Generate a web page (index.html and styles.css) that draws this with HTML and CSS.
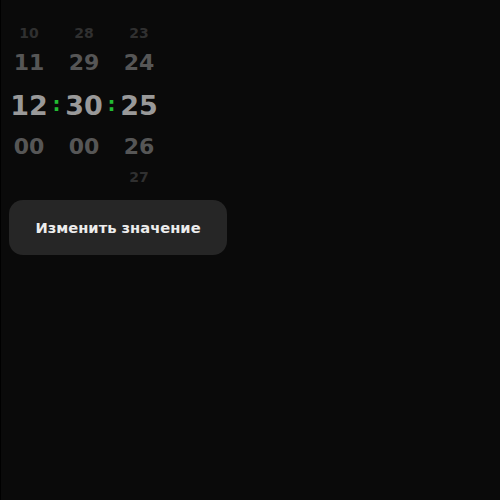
FILE: index.html
```html
<!DOCTYPE html>
<html lang="ru">
<head>
<meta charset="utf-8">
<link rel="stylesheet" href="styles.css">
</head>
<body>
<div class="page">
  <div class="picker">
    <div class="col">
      <div class="item far">10</div>
      <div class="item near">11</div>
      <div class="item cur">12</div>
      <div class="item near">00</div>
      <div class="item far"></div>
    </div>
    <div class="sep"><span class="colon">:</span></div>
    <div class="col">
      <div class="item far">28</div>
      <div class="item near">29</div>
      <div class="item cur">30</div>
      <div class="item near">00</div>
      <div class="item far"></div>
    </div>
    <div class="sep"><span class="colon">:</span></div>
    <div class="col">
      <div class="item far">23</div>
      <div class="item near">24</div>
      <div class="item cur">25</div>
      <div class="item near">26</div>
      <div class="item far">27</div>
    </div>
  </div>
  <button class="btn">Изменить значение</button>
</div>
</body>
</html>
```
FILE: styles.css
```css
html, body {
  margin: 0;
  padding: 0;
  height: 100%;
  background: #0a0a0a;
}
body {
  border-left: 1px solid #000;
  box-sizing: border-box;
  font-family: "DejaVu Sans", sans-serif;
}
.page {
  padding: 21px 8px 0 8px;
  display: flex;
  flex-direction: column;
  align-items: flex-start;
  gap: 11px;
}
.picker {
  display: flex;
  align-items: flex-start;
}
.col {
  display: flex;
  flex-direction: column;
  align-items: center;
  width: 40px;
}
.item {
  display: flex;
  align-items: center;
  justify-content: center;
  font-weight: bold;
  line-height: 1;
}
.far { height: 24px; font-size: 14px; color: #303030; }
.near { height: 36px; font-size: 22px; color: #565656; }
.cur { height: 48px; font-size: 27px; color: #999; }
.sep {
  width: 15px;
  display: flex;
  justify-content: center;
  padding-top: 60px;
  height: 48px;
  align-items: center;
  box-sizing: content-box;
}
.colon {
  color: #22bb33;
  font-size: 20px;
  font-weight: bold;
  line-height: 1;
  position: relative;
  top: -1px;
}
.btn {
  width: 218px;
  height: 55px;
  border: 0;
  border-radius: 14px;
  background: #262626;
  color: #ececec;
  font-family: "DejaVu Sans", sans-serif;
  font-weight: bold;
  font-size: 14.7px;
  padding: 0;
}
```
